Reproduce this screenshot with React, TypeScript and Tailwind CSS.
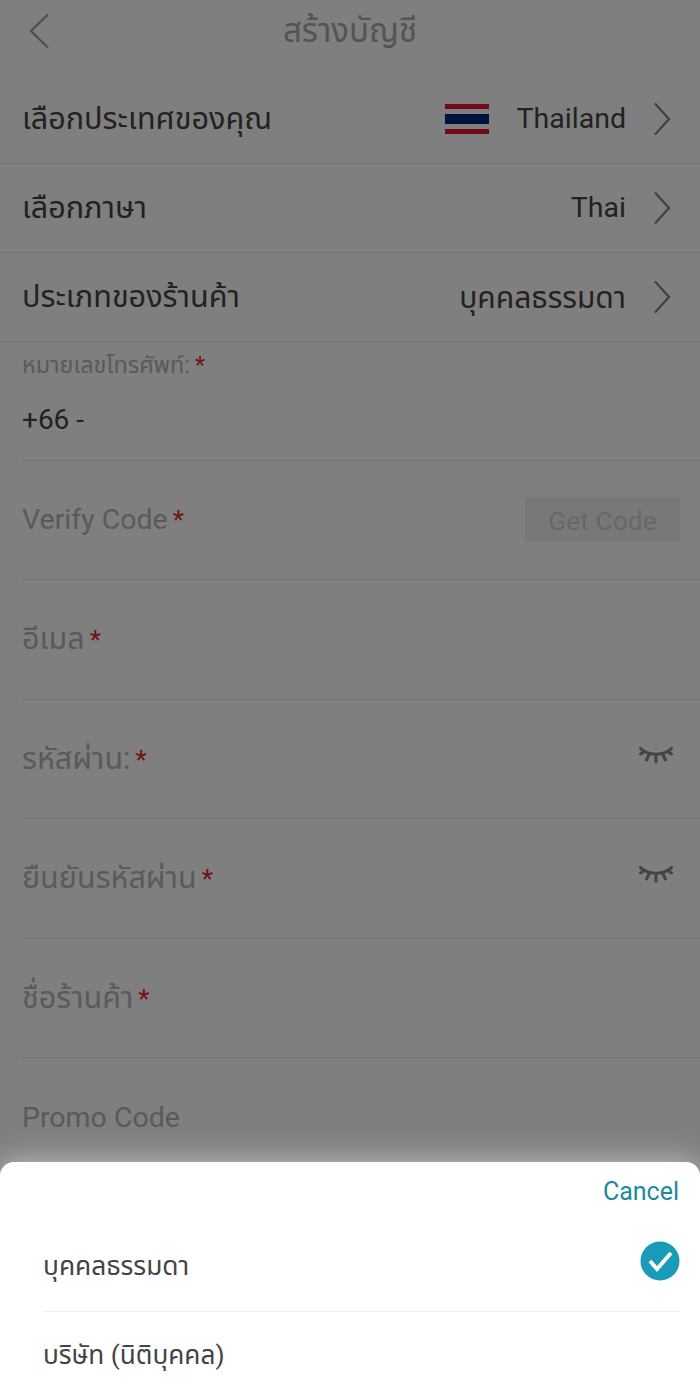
import React from "react";

function Chevron({ className = "" }: { className?: string }) {
  return (
    <svg width="18" height="34" viewBox="0 0 18 34" fill="none" className={className}>
      <path d="M2 1.5 L16 17 L2 32.5" stroke="#808080" strokeWidth="2.2" />
    </svg>
  );
}

function Eye() {
  return (
    <svg width="34" height="18" viewBox="0 0 34 18" fill="none" stroke="#888888" strokeWidth="3" strokeLinecap="round">
      <path d="M1.5 1.5 C8 9 26 9 32.5 1.5" fill="none" />
      <path d="M1.5 7 L5.5 4.5" />
      <path d="M7.5 13 L10 8" />
      <path d="M17 15 V9.5" />
      <path d="M26.5 13 L24 8" />
      <path d="M32.5 7 L28.5 4.5" />
    </svg>
  );
}

function Flag() {
  return (
    <div className="flex h-[30px] w-[44px] flex-col">
      <div className="h-[5px] bg-[#e0142e]" />
      <div className="h-[5px] bg-white" />
      <div className="h-[10px] bg-[#00247d]" />
      <div className="h-[5px] bg-white" />
      <div className="h-[5px] bg-[#e0142e]" />
    </div>
  );
}

function SelectRow({ label, value, flag, thaiValue }: { label: string; value: string; flag?: boolean; thaiValue?: boolean }) {
  return (
    <div className="flex h-[89px] items-center border-b border-[#e6e6e6] pl-[22px] pr-[29px]">
      <span className="flex-1 text-[30.6px] text-[#444444]">{label}</span>
      {flag && <div className="mr-[28px]"><Flag /></div>}
      {thaiValue ? (
        <span className="text-[30px] text-[#444444]">{value}</span>
      ) : (
        <span className="text-[28.5px] text-[#444444]">{value}</span>
      )}
      <Chevron className="ml-[27px]" />
    </div>
  );
}

function Field({ label, latin, required = true, right, h = "h-[119.5px]" }: { label: string; latin?: boolean; required?: boolean; right?: React.ReactNode; h?: string }) {
  return (
    <div className={`ml-[22px] flex ${h} items-center border-b border-[#e6e6e6] pr-[20px]`}>
      <span className={latin ? "flex-1 pt-[2px] text-[28.5px] text-[#b4b4b4]" : "flex-1 text-[30.5px] text-[#b4b4b4]"}>
        {label}
        {required && <span className="ml-[5px] text-[26px] text-[#e0261c]">*</span>}
      </span>
      {right}
    </div>
  );
}

export default function App() {
  return (
    <div
      className="relative h-[1399px] w-[700px] overflow-hidden bg-white"
      style={{ fontFamily: '"Roboto", "Noto Sans", "Noto Sans Thai", "Liberation Sans", sans-serif' }}
    >
      <div className="relative flex h-[75px] items-center justify-center pb-[14px]">
        <svg width="22" height="36" viewBox="0 0 22 36" fill="none" className="absolute left-[28px] top-[13px]">
          <path d="M20 1.5 L3 18 L20 34.5" stroke="#a0a0a0" strokeWidth="2.4" />
        </svg>
        <span className="text-[33px] text-[#a8a8a8]">สร้างบัญชี</span>
      </div>
      <SelectRow label="เลือกประเทศของคุณ" value="Thailand" flag />
      <SelectRow label="เลือกภาษา" value="Thai" />
      <SelectRow label="ประเภทของร้านค้า" value="บุคคลธรรมดา" thaiValue />
      <div className="ml-[22px] flex h-[118.6px] flex-col border-b border-[#e6e6e6]">
        <div className="mt-[8px] text-[23.4px] leading-[30px] text-[#b4b4b4]">
          หมายเลขโทรศัพท์:<span className="ml-[5px] text-[#e0261c]">*</span>
        </div>
        <div className="mt-[20px] text-[28px] leading-[40px] text-[#444444]">+66 -</div>
      </div>
      <Field
        label="Verify Code"
        latin
        right={
          <div className="flex h-[45px] w-[155px] items-center justify-center bg-[#eef1f5] pt-[2px] text-[26.5px] text-[#d0d0d0]">
            Get Code
          </div>
        }
      />
      <Field label="อีเมล" />
      <Field label="รหัสผ่าน:" right={<div className="mr-[7px] -mt-[6px]"><Eye /></div>} />
      <Field label="ยืนยันรหัสผ่าน" right={<div className="mr-[7px] -mt-[6px]"><Eye /></div>} />
      <Field label="ชื่อร้านค้า" />
      <Field label="Promo Code" latin required={false} />

      <div className="absolute inset-0 bg-black/50" />

      <div className="absolute bottom-0 left-0 h-[237px] w-[700px] rounded-t-[14px] bg-white shadow-[0_0_30px_rgba(255,255,255,0.55)]">
        <div className="flex h-[60px] items-center justify-end pr-[21px] text-[25px] text-[#1a8a9e]">Cancel</div>
        <div className="ml-[43px] mr-[20px] flex h-[90px] items-center border-b border-[#eeeeee]">
          <span className="flex-1 text-[26.3px] text-[#444444]">บุคคลธรรมดา</span>
          <svg width="40" height="40" viewBox="0 0 40 40" className="-mt-[12px]">
            <circle cx="20" cy="20" r="19.5" fill="#1a9bb8" />
            <path d="M10 20 L17 28 L31 12" fill="none" stroke="white" strokeWidth="3.8" />
          </svg>
        </div>
        <div className="ml-[43px] flex h-[87px] items-center text-[26.2px] text-[#444444]">บริษัท (นิติบุคคล)</div>
      </div>
    </div>
  );
}
